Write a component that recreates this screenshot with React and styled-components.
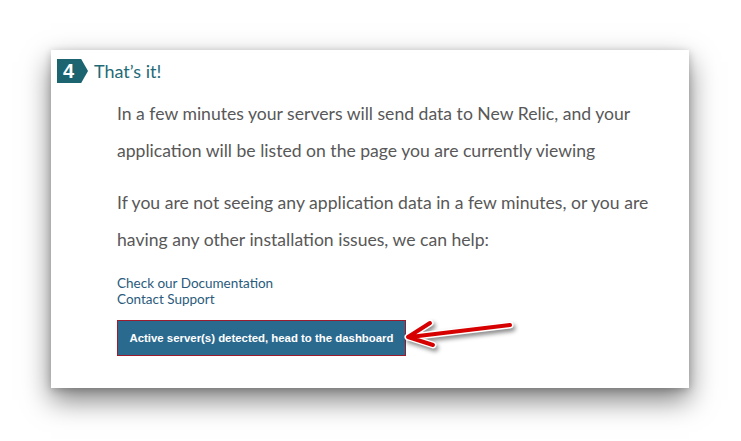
import React from 'react';
import styled, { createGlobalStyle } from 'styled-components';

const GlobalStyle = createGlobalStyle`
    body {
        margin: 0;
        background: #ffffff;
    }
`;

const Page = styled.div`
    width: 741px;
    height: 441px;
    padding: 50px 0 0 51px;
    box-sizing: border-box;
    overflow: hidden;
`;

const Card = styled.div`
    position: relative;
    width: 638px;
    height: 338px;
    background: #ffffff;
    box-shadow: 0 12px 26px rgba(0, 0, 0, 0.5), 0 2px 8px rgba(0, 0, 0, 0.2);
    padding: 9px 0 0 6px;
    box-sizing: border-box;
`;

const StepHeader = styled.div`
    display: flex;
    align-items: center;
    gap: 6px;
`;

const Badge = styled.div`
    width: 31px;
    height: 24px;
    background: #1b6470;
    clip-path: polygon(0 0, 78% 0, 100% 50%, 78% 100%, 0 100%);
    color: #fff;
    font-family: "Liberation Sans", Arial, sans-serif;
    font-weight: bold;
    font-size: 20px;
    line-height: 24px;
    padding-left: 6px;
    box-sizing: border-box;
`;

const Title = styled.h2`
    margin: 0;
    font-family: "Lato", "Open Sans", sans-serif;
    font-weight: 400;
    font-size: 18px;
    color: #1f6a77;
`;

const Body = styled.div`
    margin-left: 60px;
    margin-top: 12px;
`;

const Para = styled.p`
    margin: 0 0 15px;
    font-family: "Lato", "Open Sans", sans-serif;
    font-size: 17.6px;
    line-height: 37px;
    color: #585858;
`;

const Links = styled.div`
    display: flex;
    flex-direction: column;
    margin-top: 17px;
`;

const Link = styled.a`
    font-family: "Lato", "Open Sans", sans-serif;
    font-size: 13.5px;
    line-height: 16px;
    color: #2a5b7c;
    text-decoration: none;
`;

const DashButton = styled.button`
    display: block;
    margin-top: 13px;
    width: 289px;
    height: 36px;
    background: #2b6a8f;
    border: 1px solid #9b1c2c;
    color: #ffffff;
    font-family: "Liberation Sans", Arial, sans-serif;
    font-weight: bold;
    font-size: 11.4px;
    padding: 0;
`;

const Arrow = styled.svg`
    position: absolute;
    left: 340px;
    top: 262px;
    overflow: visible;
    filter: drop-shadow(2px 3px 2px rgba(0, 0, 0, 0.45));
`;

const arrowPath = 'M119 13 L19 25 M17 25 L39 11 M17 25 L42 33';

const App = () => {
    return (
        <>
            <GlobalStyle />
            <Page>
                <Card>
                    <StepHeader>
                        <Badge>4</Badge>
                        <Title>That’s it!</Title>
                    </StepHeader>
                    <Body>
                        <Para>
                            In a few minutes your servers will send data to New Relic, and your
                            <br />
                            application will be listed on the page you are currently viewing
                        </Para>
                        <Para>
                            If you are not seeing any application data in a few minutes, or you are
                            <br />
                            having any other installation issues, we can help:
                        </Para>
                        <Links>
                            <Link href="#">Check our Documentation</Link>
                            <Link href="#">Contact Support</Link>
                        </Links>
                        <DashButton>Active server(s) detected, head to the dashboard</DashButton>
                    </Body>
                    <Arrow width="130" height="40" viewBox="0 0 130 40">
                        <g strokeLinecap="round" strokeLinejoin="round" fill="none">
                            <path d={arrowPath} stroke="#ffffff" strokeWidth="7" />
                            <path d={arrowPath} stroke="#d60000" strokeWidth="4" />
                        </g>
                    </Arrow>
                </Card>
            </Page>
        </>
    );
};

export default App;
